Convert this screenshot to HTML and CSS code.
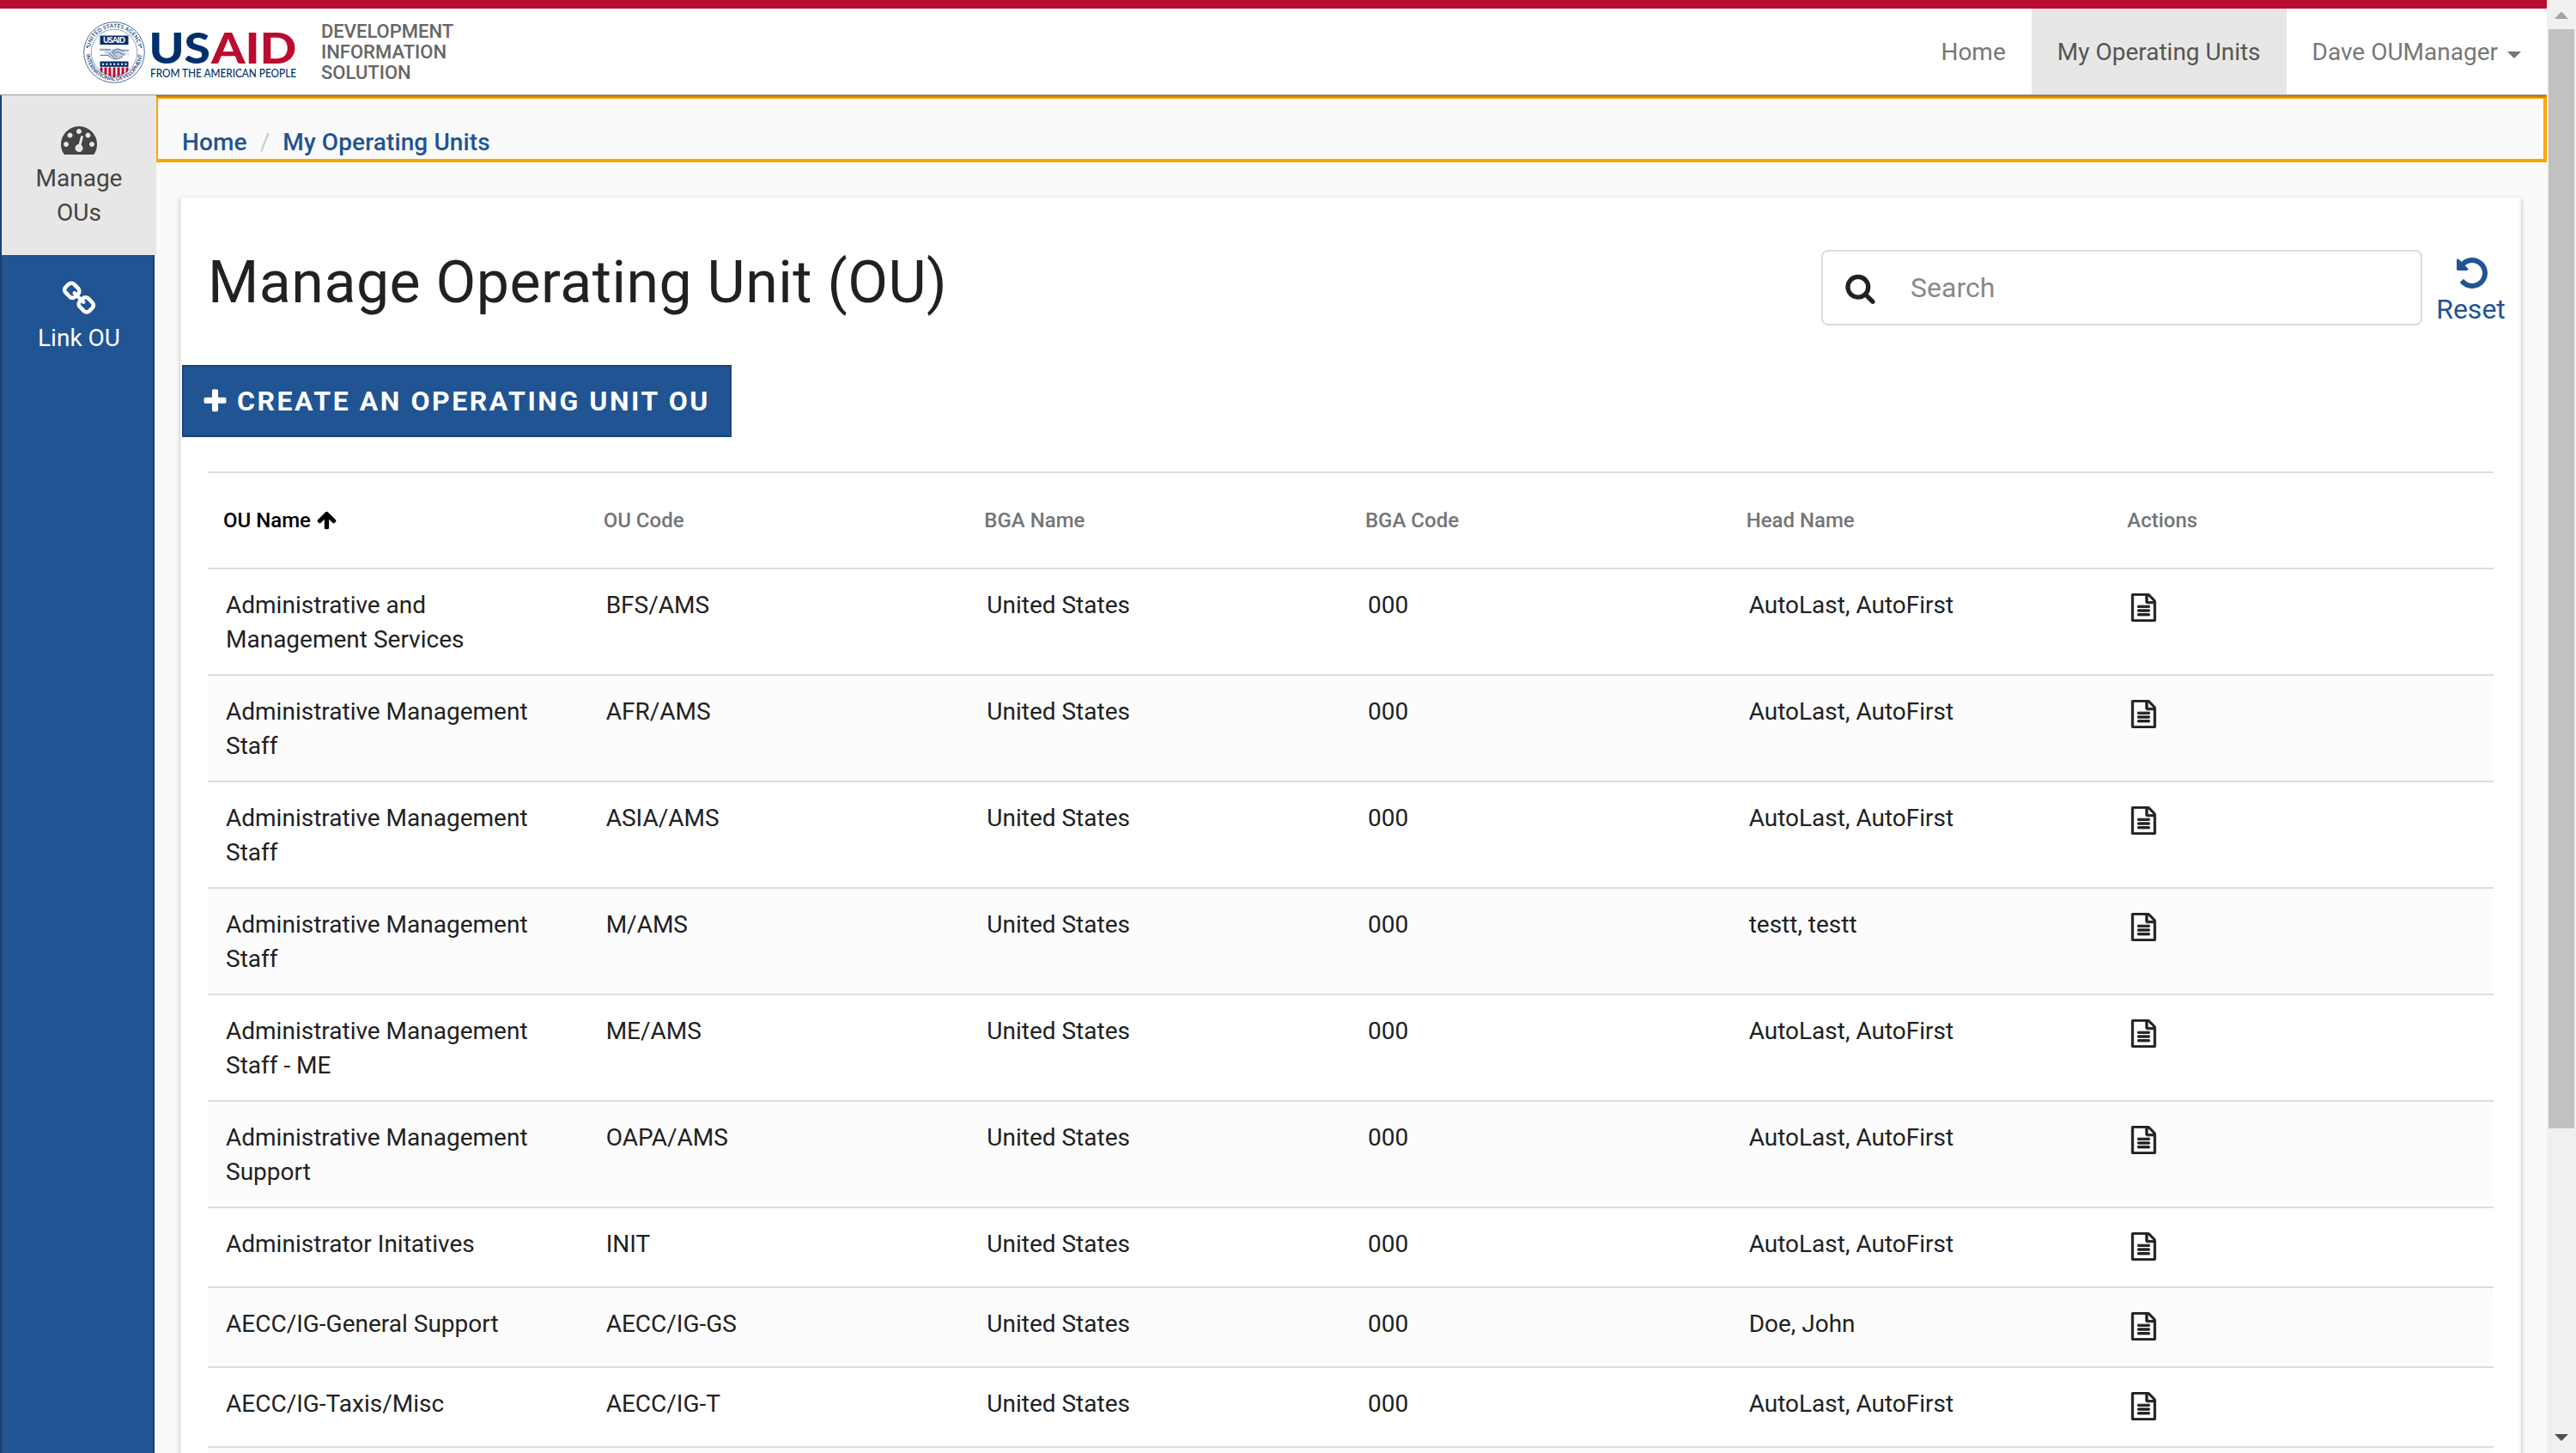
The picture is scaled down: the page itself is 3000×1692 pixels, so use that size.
FILE: index.html
```html
<!DOCTYPE html>
<html lang="en">
<head>
<meta charset="utf-8">
<title>Manage Operating Unit (OU)</title>
<link rel="stylesheet" href="styles.css">
</head>
<body>
<svg class="sprite" aria-hidden="true">
  <symbol id="i-search" viewBox="0 0 1792 1792"><path d="M1216 832q0-185-131.5-316.5t-316.5-131.5-316.5 131.5-131.5 316.5 131.5 316.5 316.5 131.5 316.5-131.5 131.5-316.5zm512 832q0 52-38 90t-90 38q-54 0-90-38l-343-342q-179 124-399 124-143 0-273.5-55.5t-225-150-150-225-55.5-273.5 55.5-273.5 150-225 225-150 273.5-55.5 273.5 55.5 225 150 150 225 55.5 273.5q0 220-124 399l343 343q37 37 37 90z"/></symbol>
  <symbol id="i-undo" viewBox="0 0 1792 1792"><path d="M1664 896q0 156-61 298t-164 245-245 164-298 61q-172 0-327-72.5t-264-204.5q-7-10-6.5-22.5t8.5-20.5l137-138q10-9 25-9 16 2 23 12 73 95 179 147t225 52q104 0 198.5-40.5t163.5-109.5 109.5-163.5 40.5-198.5-40.5-198.5-109.5-163.5-163.5-109.5-198.5-40.5q-98 0-188 35.5t-160 101.5l137 138q31 30 14 69-17 40-59 40h-448q-26 0-45-19t-19-45v-448q0-42 40-59 39-17 69 14l130 129q107-101 244.5-156.5t284.5-55.5q156 0 298 61t245 164 164 245 61 298z"/></symbol>
  <symbol id="i-plus" viewBox="0 0 1792 1792"><path d="M1600 736v192q0 40-28 68t-68 28h-416v416q0 40-28 68t-68 28h-192q-40 0-68-28t-28-68v-416h-416q-40 0-68-28t-28-68v-192q0-40 28-68t68-28h416v-416q0-40 28-68t68-28h192q40 0 68 28t28 68v416h416q40 0 68 28t28 68z"/></symbol>
  <symbol id="i-up" viewBox="0 0 1792 1792"><path d="M1675 971q0 51-37 90l-75 75q-38 38-91 38-54 0-90-38l-294-293v704q0 52-37.5 84.5t-90.5 32.5h-128q-53 0-90.5-32.5t-37.5-84.5v-704l-294 293q-36 38-90 38t-90-38l-75-75q-38-38-38-90 0-53 38-91l651-651q35-37 90-37 54 0 91 37l651 651q37 39 37 91z"/></symbol>
  <symbol id="i-file" viewBox="0 0 1792 1792"><path d="M1596 380q28 28 48 76t20 88v1152q0 40-28 68t-68 28h-1344q-40 0-68-28t-28-68v-1600q0-40 28-68t68-28h896q40 0 88 20t76 48zm-444-244v376h376q-10-29-22-41l-313-313q-12-12-41-22zm384 1528v-1024h-416q-40 0-68-28t-28-68v-416h-768v1536h1280zm-1024-864q0-14 9-23t23-9h704q14 0 23 9t9 23v64q0 14-9 23t-23 9h-704q-14 0-23-9t-9-23v-64zm736 224q14 0 23 9t9 23v64q0 14-9 23t-23 9h-704q-14 0-23-9t-9-23v-64q0-14 9-23t23-9h704zm0 256q14 0 23 9t9 23v64q0 14-9 23t-23 9h-704q-14 0-23-9t-9-23v-64q0-14 9-23t23-9h704z"/></symbol>
  <symbol id="i-gauge" viewBox="0 0 1792 1792"><path d="M384 1152q0-53-37.5-90.5t-90.5-37.5-90.5 37.5-37.5 90.5 37.5 90.5 90.5 37.5 90.5-37.5 37.5-90.5zm192-448q0-53-37.5-90.5t-90.5-37.5-90.5 37.5-37.5 90.5 37.5 90.5 90.5 37.5 90.5-37.5 37.5-90.5zm428 481l101-382q6-26-7.5-48.5t-38.5-29.5-48 6.5-30 39.5l-101 382q-60 5-107 43.5t-63 98.5q-20 77 20 146t117 89 146-20 89-117q16-60-6-117t-72-91zm660-33q0-53-37.5-90.5t-90.5-37.5-90.5 37.5-37.5 90.5 37.5 90.5 90.5 37.5 90.5-37.5 37.5-90.5zm-640-640q0-53-37.5-90.5t-90.5-37.5-90.5 37.5-37.5 90.5 37.5 90.5 90.5 37.5 90.5-37.5 37.5-90.5zm448 192q0-53-37.5-90.5t-90.5-37.5-90.5 37.5-37.5 90.5 37.5 90.5 90.5 37.5 90.5-37.5 37.5-90.5zm320 448q0 261-141 483-19 29-54 29h-1402q-35 0-54-29-141-221-141-483 0-182 71-348t191-286 286-191 348-71 348 71 286 191 191 286 71 348z"/></symbol>
  <symbol id="i-link" viewBox="0 0 1792 1792"><path d="M1520 1216q0-40-28-68l-208-208q-28-28-68-28-42 0-72 32 3 3 19 18.5t21.5 21.5 15 19 13 25.5 3.5 27.5q0 40-28 68t-68 28q-15 0-27.5-3.5t-25.5-13-19-15-21.5-21.5-18.5-19q-33 31-33 73 0 40 28 68l206 207q27 27 68 27 40 0 68-26l147-146q28-28 28-67zm-703-705q0-40-28-68l-206-207q-28-28-68-28-39 0-68 27l-147 146q-28 28-28 67 0 40 28 68l208 208q27 27 68 27 42 0 72-31-3-3-19-18.5t-21.5-21.5-15-19-13-25.5-3.5-27.5q0-40 28-68t68-28q15 0 27.5 3.5t25.5 13 19 15 21.5 21.5 18.5 19q33-31 33-73zm895 705q0 120-85 203l-147 146q-83 83-203 83-121 0-204-85l-206-207q-83-83-83-203 0-123 88-209l-88-88q-86 88-208 88-120 0-204-84l-208-208q-84-84-84-204t85-203l147-146q83-83 203-83 121 0 204 85l206 207q83 83 83 203 0 123-88 209l88 88q86-88 208-88 120 0 204 84l208 208q84 84 84 204z"/></symbol>
</svg>

<div class="screen">
  <div class="page">
    <header class="topbar">
      <a class="brand">
        <svg class="logo" viewBox="0 0 256 76" role="img" aria-label="USAID">
          <defs>
            <path id="arc-top" d="M9.5 45.55A28.8 28.8 0 1 1 64.5 45.55"/>
            <path id="arc-bottom" d="M4.200 37A32.800 32.800 0 0 0 69.800 37"/>
          </defs>
          <circle cx="37" cy="37" r="35.3" fill="#fff" stroke="#4a6b9b" stroke-width="1"/>
          <circle cx="37" cy="37" r="26.800" fill="none" stroke="#6d88ae" stroke-width=".8"/>
          <text class="ring"><textPath href="#arc-top" startOffset="50%" text-anchor="middle" textLength="78">UNITED STATES AGENCY</textPath></text>
          <text class="ring"><textPath href="#arc-bottom" startOffset="50%" text-anchor="middle" textLength="98">INTERNATIONAL DEVELOPMENT</textPath></text>
          <circle cx="5.6" cy="31" r="1.1" fill="#2a5089"/>
          <circle cx="68.4" cy="31" r="1.1" fill="#2a5089"/>
          <rect x="20.5" y="17.500" width="33" height="10.500" fill="#002f6c"/>
          <text class="plate" x="37" y="26" text-anchor="middle" textLength="26">USAID</text>
          <path d="M20 32.500h8l6 1.200 6-1.700 6 1.500h8v1.300h-7l4 3.700h4v1.300h-5l-5 3.200-7 1.700-6-3.500h-12v-1.200h10l-5-3 3-2.500h-8z" fill="#c6d1e1"/>
          <path d="M20 34h7l6-.7M54 35h-7l-6-2-6 2.500 3 2 4-1 7 4M21 40.200h8l6 4 6 .6 6-3M31 38l6 5M34 36.500l6 6" fill="none" stroke="#3d6294" stroke-width=".9"/>
          <rect x="20.500" y="47.500" width="33" height="6.300" fill="#002f6c"/>
          <path d="M23 50.700h29" stroke="#fff" stroke-width="2" stroke-dasharray="2 2.400"/>
          <path d="M20.500 54.500h3v6.500l-2-1.500-1-2zM25.500 54.500h3v9l-3-1.400zM30.400 54.500h3v10.500l-3-.8zM35.500 54.500h3v11.500l-1.500.5-1.500-.5zM40.600 54.500h3v9.700l-3 .8zM45.500 54.500h3v7.600l-3 1.400zM50.500 54.500h3v3l-1 2-2 1.500z" fill="#ba0c2f"/>
          <text class="word" x="77.500" y="49.700" fill="#002f6c" textLength="71.500" lengthAdjust="spacingAndGlyphs">US</text>
          <text class="word" x="150" y="49.700" fill="#ba0c2f" textLength="99.500" lengthAdjust="spacingAndGlyphs">AID</text>
          <text class="tag" x="79" y="66" textLength="170" lengthAdjust="spacingAndGlyphs">FROM THE AMERICAN PEOPLE</text>
        </svg>
        <span class="product">DEVELOPMENT<br>INFORMATION<br>SOLUTION</span>
      </a>
      <nav class="nav">
        <a class="nav-item">Home</a>
        <a class="nav-item active">My Operating Units</a>
        <a class="nav-item user">Dave OUManager<i class="caret"></i></a>
      </nav>
    </header>

    <div class="body">
      <aside class="sidebar">
        <a class="side-item active"><svg class="side-icon"><use href="#i-gauge"/></svg><span>Manage<br>OUs</span></a>
        <a class="side-item"><svg class="side-icon"><use href="#i-link"/></svg><span>Link OU</span></a>
      </aside>
      <div class="content">
        <div class="crumbs"><a>Home</a><span class="slash">/</span><a>My Operating Units</a></div>
        <main class="card">
          <div class="card-head">
            <h1>Manage Operating Unit (OU)</h1>
            <div class="search"><svg class="search-icon"><use href="#i-search"/></svg><span>Search</span></div>
            <a class="reset"><svg class="reset-icon"><use href="#i-undo"/></svg><span>Reset</span></a>
          </div>
          <button class="create"><svg class="plus-icon"><use href="#i-plus"/></svg><span>CREATE AN OPERATING UNIT OU</span></button>
          <table class="grid">
            <thead><tr><th class="sorted">OU Name <svg class="sort-icon"><use href="#i-up"/></svg></th><th>OU Code</th><th>BGA Name</th><th>BGA Code</th><th>Head Name</th><th>Actions</th></tr></thead>
            <tbody>
              <tr class="tall"><td>Administrative and Management Services</td><td>BFS/AMS</td><td>United States</td><td>000</td><td>AutoLast, AutoFirst</td><td><svg class="file-icon"><use href="#i-file"/></svg></td></tr>
              <tr class="tall"><td>Administrative Management Staff</td><td>AFR/AMS</td><td>United States</td><td>000</td><td>AutoLast, AutoFirst</td><td><svg class="file-icon"><use href="#i-file"/></svg></td></tr>
              <tr class="tall"><td>Administrative Management Staff</td><td>ASIA/AMS</td><td>United States</td><td>000</td><td>AutoLast, AutoFirst</td><td><svg class="file-icon"><use href="#i-file"/></svg></td></tr>
              <tr class="tall"><td>Administrative Management Staff</td><td>M/AMS</td><td>United States</td><td>000</td><td>testt, testt</td><td><svg class="file-icon"><use href="#i-file"/></svg></td></tr>
              <tr class="tall"><td>Administrative Management Staff - ME</td><td>ME/AMS</td><td>United States</td><td>000</td><td>AutoLast, AutoFirst</td><td><svg class="file-icon"><use href="#i-file"/></svg></td></tr>
              <tr class="tall"><td>Administrative Management Support</td><td>OAPA/AMS</td><td>United States</td><td>000</td><td>AutoLast, AutoFirst</td><td><svg class="file-icon"><use href="#i-file"/></svg></td></tr>
              <tr><td>Administrator Initatives</td><td>INIT</td><td>United States</td><td>000</td><td>AutoLast, AutoFirst</td><td><svg class="file-icon"><use href="#i-file"/></svg></td></tr>
              <tr><td>AECC/IG-General Support</td><td>AECC/IG-GS</td><td>United States</td><td>000</td><td>Doe, John</td><td><svg class="file-icon"><use href="#i-file"/></svg></td></tr>
              <tr><td>AECC/IG-Taxis/Misc</td><td>AECC/IG-T</td><td>United States</td><td>000</td><td>AutoLast, AutoFirst</td><td><svg class="file-icon"><use href="#i-file"/></svg></td></tr>
              <tr><td></td><td></td><td></td><td></td><td></td><td></td></tr>
            </tbody>
          </table>
        </main>
      </div>
    </div>
  </div>
  <div class="scrollbar">
    <svg class="arrow" viewBox="0 0 34 34"><path d="M17 13.500L25 22H9z" fill="#a3a3a3"/></svg>
    <div class="thumb"></div>
    <svg class="arrow" viewBox="0 0 34 34"><path d="M9 12h16l-8 8z" fill="#505050"/></svg>
  </div>
</div>
</body>
</html>
```
FILE: styles.css
```css
* { box-sizing: border-box; }
html, body { margin: 0; height: 1692px; overflow: hidden; }
body { font: 400 28px/40px Roboto, "Liberation Sans", sans-serif; color: #212121; background: #fafafa; }
svg { display: block; fill: currentColor; }
.sprite { display: none; }

.screen { display: flex; width: 3000px; height: 1692px; overflow: hidden; }
.page { display: flex; flex-direction: column; width: 2966px; height: 1692px; overflow: hidden; }

/* top bar */
.topbar { flex: none; position: relative; z-index: 1; display: flex; justify-content: space-between; height: 111px; background: #fff; border-top: 10px solid #ba0c2f; border-bottom: 1px solid #999; box-shadow: 0 1px 3px rgba(0, 0, 0, .5); }
.brand { display: flex; padding: 14px 0 0 96px; }
.logo { width: 256px; height: 76px; }
.ring { font: 700 6.300px Lato, sans-serif; fill: #2a5089; }
.plate { font: 900 9.5px Lato, sans-serif; fill: #fff; }
.word { font: 900 50px Lato, sans-serif; }
.tag { font: 500 12.5px Lato, sans-serif; fill: #002f6c; }
.product { padding: 1px 0 0 22px; font-size: 22px; line-height: 24px; font-weight: 500; color: #666; }
.nav { display: flex; color: #777; }
.nav-item { display: flex; align-items: center; height: 100px; padding: 2px 30px 0; }
.nav-item.active { background: #e7e7e7; color: #555; }
.caret { margin: 5px 0 0 11px; border: 8px solid transparent; border-top-color: #777; border-bottom: 0; }

/* sidebar */
.body { flex: 1; display: flex; min-height: 0; }
.sidebar { position: relative; z-index: 2; width: 180px; background: #205493; border: solid #193f70; border-width: 0 2px; }
.side-item { display: flex; flex-direction: column; align-items: center; width: 180px; height: 186px; padding-top: 27px; text-align: center; color: #fff; }
.side-item.active { background: #e7e7e7; color: #444; }
.side-icon { width: 42px; height: 42px; margin: 3px 0 5px; }

/* content */
.content { flex: 1; min-width: 0; display: flex; flex-direction: column; margin-left: 2px; }
.crumbs { flex: none; display: flex; gap: 15px; height: 78px; padding: 31px 0 0 28px; border: 4px solid #ffa500; border-left-width: 2px; font-weight: 500; letter-spacing: .12px; color: #205493; white-space: nowrap; }
.slash { color: #ccc; font-weight: 400; }
.card { flex: none; width: 2726px; height: 1560px; margin: 40px 0 0 28px; background: #fff; border: 2px solid #f6f6f6; box-shadow: 0 3px 6px rgba(0, 0, 0, .25); }
.card-head { display: flex; height: 194px; padding-left: 30px; }
h1 { flex: 1; margin: 58px 0 0; font-size: 68px; line-height: 80px; font-weight: 400; letter-spacing: .5px; }
.search { display: flex; align-items: center; width: 700px; height: 88px; margin-top: 60px; padding-left: 25px; border: 2px solid #ddd; border-radius: 8px; font-size: 32px; color: #888; }
.search-icon { width: 37px; height: 37px; margin-right: 40px; color: #212121; }
.reset { display: flex; flex-direction: column; align-items: center; width: 113px; padding-top: 66px; font-size: 32px; line-height: 40px; color: #205493; }
.reset-icon { width: 42px; height: 42px; margin: 0 0 1px 2px; }
.create { display: flex; align-items: center; width: 640px; height: 84px; padding: 0 0 0 20px; border: 2px solid #1c4577; background: #205493; color: #fff; font: 700 32px/40px Roboto, sans-serif; letter-spacing: 2.56px; white-space: nowrap; }
.plus-icon { width: 33px; height: 33px; margin-right: 9px; }

/* table */
.grid { width: 2662px; margin: 40px 0 0 30px; table-layout: fixed; border-collapse: separate; border-spacing: 0; }
th { height: 112px; padding: 0 17px; border-top: 2px solid #ddd; text-align: left; font-size: 24px; line-height: 34px; font-weight: 500; color: #757575; white-space: nowrap; }
th.sorted { padding-left: 18px; color: #000; }
.sort-icon { display: inline-block; width: 25px; height: 25px; vertical-align: -4px; }
td { height: 93px; padding: 22px 20px 0; border-top: 2px solid #ddd; vertical-align: top; }
td:first-child { padding-left: 21px; }
.tall td { height: 124px; }
tbody tr:nth-child(even) { background: #fcfcfc; }
.file-icon { width: 33px; height: 33px; margin-top: 6px; overflow: visible; stroke: currentColor; stroke-width: 50px; }

/* window scrollbar */
.scrollbar { display: flex; flex-direction: column; width: 34px; background: #f0f0f0; }
.arrow { width: 34px; height: 34px; }
.thumb { width: 30px; height: 1280px; margin: 0 2px 344px; background: #c1c1c1; flex: none; }
```
